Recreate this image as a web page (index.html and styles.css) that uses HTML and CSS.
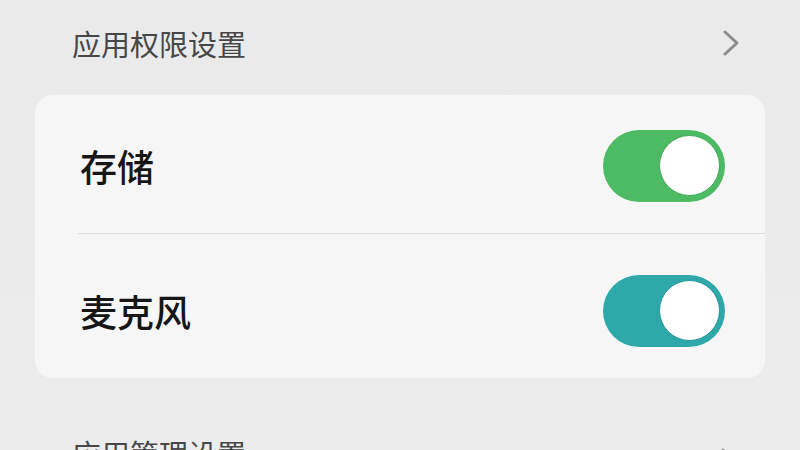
FILE: index.html
```html
<!DOCTYPE html>
<html lang="zh-CN">
<head>
<meta charset="utf-8">
<link rel="stylesheet" href="styles.css">
</head>
<body>
<div class="page">
  <div class="nav-row top">
    <span class="nav-label">应用权限设置</span>
    <svg class="chev" width="18" height="28" viewBox="0 0 18 28"><polyline points="3,3 15,14 3,25" fill="none" stroke="#8c8c8c" stroke-width="3" stroke-linecap="round" stroke-linejoin="round"/></svg>
  </div>
  <div class="card">
    <div class="row first">
      <span class="row-label">存储</span>
      <div class="toggle green"><div class="knob"></div></div>
    </div>
    <div class="divider"></div>
    <div class="row second">
      <span class="row-label">麦克风</span>
      <div class="toggle teal"><div class="knob"></div></div>
    </div>
  </div>
  <div class="nav-row bottom">
    <span class="nav-label">应用管理设置</span>
    <svg class="chev" width="18" height="28" viewBox="0 0 18 28"><polyline points="3,3 15,14 3,25" fill="none" stroke="#8c8c8c" stroke-width="3" stroke-linecap="round" stroke-linejoin="round"/></svg>
  </div>
</div>
</body>
</html>
```
FILE: styles.css
```css
html, body {
  margin: 0;
  padding: 0;
  background: #ebebec;
  overflow: hidden;
}
.page {
  width: 800px;
  height: 450px;
  overflow: hidden;
  display: flex;
  flex-direction: column;
  font-family: "Noto Sans CJK SC", "Noto Sans", sans-serif;
  background: linear-gradient(180deg, #eaeaeb 0%, #ececed 100%);
}
.nav-row {
  display: flex;
  align-items: center;
  justify-content: space-between;
  padding: 0 60px 0 72px;
  flex-shrink: 0;
}
.nav-row.top {
  height: 86px;
}
.nav-row.bottom {
  margin-top: 61px;
  height: 40px;
  align-items: flex-start;
  padding-right: 62px;
}
.nav-label {
  font-size: 29px;
  line-height: 1;
  color: #474747;
  letter-spacing: 0;
}
.chev {
  display: block;
}
.nav-row.bottom .chev {
  margin-top: 8px;
}
.card {
  margin: 9px 35px 0 35px;
  background: #f6f6f6;
  border-radius: 18px;
  display: flex;
  flex-direction: column;
  flex-shrink: 0;
}
.row {
  display: flex;
  align-items: center;
  justify-content: space-between;
  padding: 0 40px 0 45px;
}
.row.first {
  height: 134px;
  padding-top: 4px;
}
.row.second {
  height: 134px;
  padding-top: 10px;
}
.row-label {
  font-size: 37px;
  line-height: 1;
  font-weight: 500;
  color: #161616;
}
.divider {
  height: 1px;
  background: #dcdcdc;
  margin-left: 43px;
}
.toggle {
  position: relative;
  width: 122px;
  height: 72px;
  border-radius: 36px;
}
.toggle.green {
  background: #4dbb63;
}
.toggle.teal {
  background: #2fa8a9;
}
.knob {
  position: absolute;
  right: 5px;
  top: 5px;
  width: 59px;
  height: 59px;
  border-radius: 50%;
  background: #ffffff;
}
.toggle.green .knob {
  border: 1.5px solid #3fa857;
}
.toggle.teal .knob {
  border: 1.5px solid #24979a;
}
```
